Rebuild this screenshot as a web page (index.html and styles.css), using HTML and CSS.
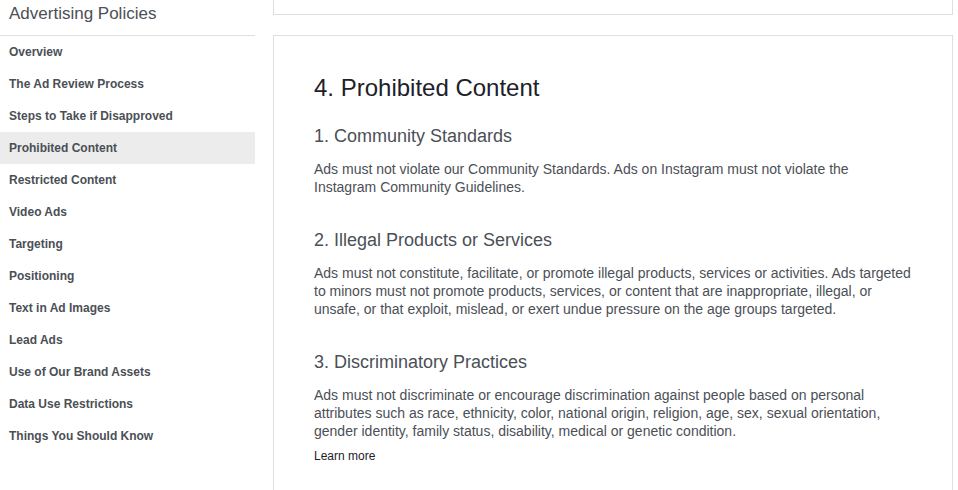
FILE: index.html
```
<!DOCTYPE html>
<html lang="en">
<head>
<meta charset="UTF-8" />
<title>Advertising Policies</title>
<link rel="stylesheet" href="styles.css">
</head>
<body>

<div class="page">
  <!-- Navegación lateral -->
  <aside class="sidebar">
    <div class="sidebar-title">Advertising Policies</div>
    <nav class="nav">
      <a class="nav-item" href="#">Overview</a>
      <a class="nav-item" href="#">The Ad Review Process</a>
      <a class="nav-item" href="#">Steps to Take if Disapproved</a>
      <a class="nav-item active" href="#">Prohibited Content</a>
      <a class="nav-item" href="#">Restricted Content</a>
      <a class="nav-item" href="#">Video Ads</a>
      <a class="nav-item" href="#">Targeting</a>
      <a class="nav-item" href="#">Positioning</a>
      <a class="nav-item" href="#">Text in Ad Images</a>
      <a class="nav-item" href="#">Lead Ads</a>
      <a class="nav-item" href="#">Use of Our Brand Assets</a>
      <a class="nav-item" href="#">Data Use Restrictions</a>
      <a class="nav-item" href="#">Things You Should Know</a>
    </nav>
  </aside>

  <!-- Contenido -->
  <main class="content">
    <div class="card card-prev"></div>

    <section class="card">
      <h1 class="section-title">4. Prohibited Content</h1>

      <div class="policy">
        <h2>1. Community Standards</h2>
        <p>Ads must not violate our <a href="#">Community Standards</a>. Ads on Instagram must not violate the <a href="#">Instagram Community Guidelines</a>.</p>
      </div>

      <div class="policy">
        <h2>2. Illegal Products or Services</h2>
        <p>Ads must not constitute, facilitate, or promote illegal products, services or activities. Ads targeted to minors must not promote products, services, or content that are inappropriate, illegal, or unsafe, or that exploit, mislead, or exert undue pressure on the age groups targeted.</p>
      </div>

      <div class="policy">
        <h2>3. Discriminatory Practices</h2>
        <p>Ads must not discriminate or encourage discrimination against people based on personal attributes such as race, ethnicity, color, national origin, religion, age, sex, sexual orientation, gender identity, family status, disability, medical or genetic condition.</p>
        <a class="learn-more" href="#">Learn more</a>
      </div>
    </section>
  </main>
</div>

</body>
</html>
```

FILE: styles.css
```
/* Reset básico */
* {
  margin: 0;
  padding: 0;
  box-sizing: border-box;
}

body {
  font-family: 'Liberation Sans', Arial, sans-serif;
  background: #fff;
  color: #4b4f56;
  height: 490px;
  overflow: hidden;
}

.page {
  display: flex;
  align-items: flex-start;
}

/* Barra lateral */
.sidebar {
  width: 255px;
  flex-shrink: 0;
}

.sidebar-title {
  height: 36px;
  line-height: 27px;
  padding-left: 9px;
  font-size: 17px;
  color: #4b4f56;
  border-bottom: 1px solid #dddfe2;
}

.nav {
  display: flex;
  flex-direction: column;
}

.nav-item {
  display: block;
  height: 32px;
  line-height: 32px;
  padding-left: 9px;
  font-size: 12px;
  font-weight: bold;
  color: #4b4f56;
  text-decoration: none;
}

.nav-item.active {
  background: #ececec;
}

/* Contenido */
.content {
  width: 680px;
  margin-left: 18px;
  display: flex;
  flex-direction: column;
  gap: 20px;
}

.card {
  border: 1px solid #dddfe2;
  background: #fff;
  padding: 38px 40px 60px;
}

.card-prev {
  height: 15px;
  border-top: none;
  padding: 0;
}

.section-title {
  font-size: 24px;
  font-weight: normal;
  color: #1d2129;
  line-height: 28px;
  margin-bottom: 23px;
}

.policy {
  margin-bottom: 33px;
}

.policy h2 {
  font-size: 18px;
  font-weight: normal;
  color: #4b4f56;
  line-height: 22px;
  margin-bottom: 13px;
}

.policy p {
  font-size: 14px;
  line-height: 18px;
  color: #4b4f56;
}

.policy p a {
  color: #4b4f56;
  text-decoration: none;
}

.learn-more {
  display: inline-block;
  margin-top: 9px;
  font-size: 12px;
  color: #1d2129;
  text-decoration: none;
}
```
